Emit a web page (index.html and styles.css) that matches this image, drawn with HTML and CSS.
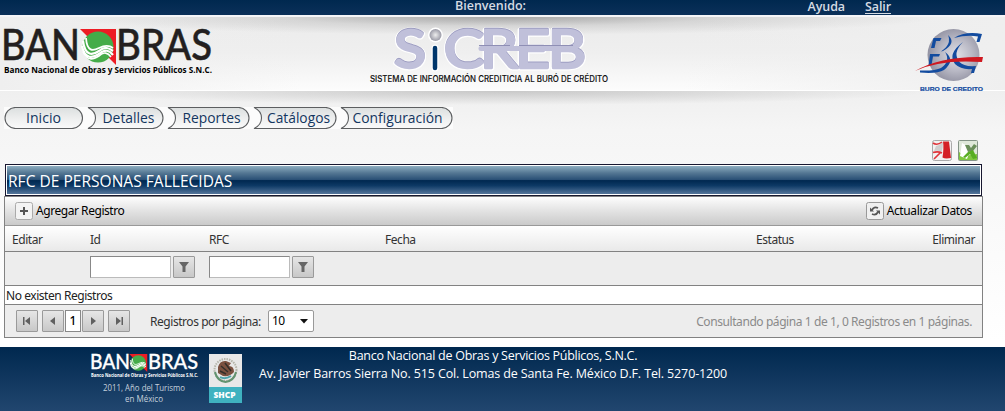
FILE: index.html
```html
<!DOCTYPE html>
<html lang="es">
<head>
<meta charset="utf-8">
<title>SICREB</title>
<link rel="stylesheet" href="styles.css">
</head>
<body>
<svg class="defs" width="0" height="0">
  <defs>
    <symbol id="emblem" viewBox="0 0 37 36">
      <path d="M0 0H36V36Z" fill="#ed1c24"/>
      <circle cx="18" cy="18" r="15.500" fill="#45ac49"/>
      <g fill="none" stroke="#fff">
        <path d="M6 9C7 23 13 22 19 19C25 16 29 16 33 19" stroke-width="1.800"/>
        <path d="M3 12C5 28 13 26 19 22C25 17 29 19 33 22" stroke-width="2.200"/>
        <path d="M2 17C5 31 13 29 19 25C25 20 29 21 33 26" stroke-width="2.200"/>
        <path d="M3 23C8 33 14 30 19 27C24 22 28 24 31 28" stroke-width="1.600"/>
      </g>
    </symbol>
    <radialGradient id="globe" cx=".55" cy=".5" r=".55"><stop stop-color="#e0e0e6"/><stop offset=".55" stop-color="#b9b9c5"/><stop offset="1" stop-color="#9292a2"/></radialGradient>
    <radialGradient id="dot"><stop stop-color="#eee"/><stop offset="1" stop-color="#9a9aa6"/></radialGradient>
    <linearGradient id="pill" x2="0" y2="1"><stop stop-color="#dcdfdf"/><stop offset=".6" stop-color="#f0f1f1"/><stop offset="1" stop-color="#fafafa"/></linearGradient>
  </defs>
</svg>

<div class="topbar">
  <span class="welcome">Bienvenido:</span>
  <span class="links"><a>Ayuda</a><a class="exit">Salir</a></span>
</div>

<header class="header">
  <svg class="logo-bank" width="214" height="50" viewBox="0 0 214 50">
    <g class="wordmark" fill="#231f20">
      <text x="-3" y="34" textLength="79" lengthAdjust="spacingAndGlyphs">BAN</text>
      <text x="112" y="34" textLength="96" lengthAdjust="spacingAndGlyphs">BRAS</text>
    </g>
    <use href="#emblem" x="76" y="3" width="37" height="36"/>
    <text class="bank-name" x="0" y="47" textLength="208" lengthAdjust="spacingAndGlyphs">Banco Nacional de Obras y Servicios Públicos S.N.C.</text>
  </svg>
  <svg class="logo-app" width="250" height="64" viewBox="365 22 250 64">
    <g class="app-halo">
      <text x="394" y="68" textLength="32" lengthAdjust="spacingAndGlyphs">S</text>
      <text x="444" y="68" textLength="40" lengthAdjust="spacingAndGlyphs">C</text>
      <text x="480" y="68" textLength="38" lengthAdjust="spacingAndGlyphs">R</text>
      <text x="515" y="68" textLength="35" lengthAdjust="spacingAndGlyphs">E</text>
      <text x="548" y="68" textLength="38" lengthAdjust="spacingAndGlyphs">B</text>
    </g>
    <g class="app-letters">
      <text x="394" y="68" textLength="32" lengthAdjust="spacingAndGlyphs">S</text>
      <text x="444" y="68" textLength="40" lengthAdjust="spacingAndGlyphs">C</text>
      <text x="480" y="68" textLength="38" lengthAdjust="spacingAndGlyphs">R</text>
      <text x="515" y="68" textLength="35" lengthAdjust="spacingAndGlyphs">E</text>
      <text x="548" y="68" textLength="38" lengthAdjust="spacingAndGlyphs">B</text>
    </g>
    <path d="M481 48.500H575" stroke="#c0c0da" stroke-width="5" stroke-linecap="round"/>
    <path d="M479 45.500H510M519 45.500H573" stroke="#8f8fb5" stroke-width="1"/>
    <circle cx="435.500" cy="35" r="7.500" fill="#fff"/>
    <circle cx="435.500" cy="35" r="6" fill="url(#dot)"/>
    <path d="M435 48V68" stroke="#fff" stroke-width="7" stroke-linecap="round"/>
    <path d="M435 48V68" stroke="#00366b" stroke-width="4.500" stroke-linecap="round"/>
    <text class="app-sub" x="370" y="81.500" textLength="238" lengthAdjust="spacingAndGlyphs">SISTEMA DE INFORMACIÓN CREDITICIA AL BURÓ DE CRÉDITO</text>
  </svg>
  <svg class="logo-buro" width="72" height="66" viewBox="914 27 72 66">
    <circle cx="953.500" cy="55" r="26" fill="url(#globe)"/>
    <g fill="#124b9f">
      <path d="M931 48L933.500 38H941.500L940 41H936L934.500 48Z"/>
      <path d="M948 35Q957 43 943 51L941 51.500Q952 44 948 35Z"/>
      <path d="M928.500 65L930 54H940L939 56.500H933L931.500 65Z"/>
      <path d="M945 52Q956 60 944 70Q937 74 920 72.500V70.500Q935 71 941 68Q951 61 945 52Z"/>
      <path d="M954 38Q965 31 982 34L979.500 42H976.500L978 36.500Q967 34.500 954 38Z"/>
      <path d="M963 42Q947 54 955 64Q961 70 972 69L971 73H974L976 66Q964 67 959.500 62Q952 53 963 42Z"/>
    </g>
    <path d="M915 71Q941 56 983 57L982 62Q940 59 915 71Z" fill="#cf1820"/>
    <text class="buro-name" x="920" y="90.800" textLength="63" lengthAdjust="spacingAndGlyphs">BURO DE CREDITO</text>
  </svg>
</header>

<nav class="nav">
  <svg width="449" height="22" viewBox="4 107 449 22">
    <rect x="4" y="107" width="449" height="22" fill="#fcfcfc"/>
    <g fill="url(#pill)" stroke="#5c5e60" stroke-width="1.100">
      <rect x="5" y="107.500" width="77.500" height="21" rx="10.500"/>
      <path d="M88 107.500H152.500a10.500 10.500 0 0 1 0 21H88Q95.500 125 95.500 118T88 107.500Z"/>
      <path d="M168 107.500H238.500a10.500 10.500 0 0 1 0 21H168Q175.500 125 175.500 118T168 107.500Z"/>
      <path d="M254 107.500H325.500a10.500 10.500 0 0 1 0 21H254Q261.500 125 261.500 118T254 107.500Z"/>
      <path d="M341 107.500H441.500a10.500 10.500 0 0 1 0 21H341Q348.500 125 348.500 118T341 107.500Z"/>
    </g>
    <g class="nav-text">
      <text x="26" y="123" textLength="35" lengthAdjust="spacingAndGlyphs">Inicio</text>
      <text x="102.500" y="123" textLength="52" lengthAdjust="spacingAndGlyphs">Detalles</text>
      <text x="182.500" y="123" textLength="58" lengthAdjust="spacingAndGlyphs">Reportes</text>
      <text x="267" y="123" textLength="63" lengthAdjust="spacingAndGlyphs">Catálogos</text>
      <text x="352.500" y="123" textLength="90" lengthAdjust="spacingAndGlyphs">Configuración</text>
    </g>
  </svg>
</nav>

<div class="exports">
  <svg width="20" height="21" viewBox="0 0 20 21">
    <rect x=".5" y=".5" width="19" height="20" rx="2" fill="#f2f2f2" stroke="#aaa"/>
    <path d="M4 6Q8 5 11 2Q11 8 9.500 12Q6 10 2 11Z" fill="#d0cece"/>
    <path d="M11 1.500H17L19 18Q13 19 10.500 17.500Q12 8 11 1.500Z" fill="#d42027"/>
    <path d="M1 3Q5 6 10 2M1 12.500Q6 11 10 13M2 19Q6 15 9 12" fill="none" stroke="#e0343a" stroke-width="1.600"/>
  </svg>
  <svg width="20" height="21" viewBox="0 0 20 21">
    <rect x=".5" y=".5" width="19" height="20" rx="1" fill="#dfe8da" stroke="#849487"/>
    <path d="M1 20V12Q7 17 19 14V20Z" fill="#7fc740"/>
    <path d="M4 3L2 16L9 19L13 8Z" fill="#fff"/>
    <path d="M7 5H11L13 8L16 4L19 6L15 11L10 12Z" fill="#6b8f5b"/>
    <path d="M10 12L15 10L19 18L15 19L12 14L7 18L5 17Z" fill="#57ad22"/>
  </svg>
</div>

<h1 class="title"><span>RFC DE PERSONAS FALLECIDAS</span></h1>

<main class="grid">
  <div class="toolbar">
    <div class="command">
      <svg width="18" height="18" viewBox="0 0 18 18"><rect x=".5" y=".5" width="17" height="17" rx="2" fill="#f3f3f3" stroke="#aaa"/><path d="M9 5V13M5 9H13" stroke="#555" stroke-width="2"/></svg>
      <span class="t-add">Agregar Registro</span>
    </div>
    <div class="command">
      <svg width="18" height="18" viewBox="0 0 18 18"><rect x=".5" y=".5" width="17" height="17" rx="2" fill="#f0f0f0" stroke="#999"/><path d="M6 8Q8 4 12 6M12 10Q10 14 6 12" stroke="#555" stroke-width="1.700" fill="none"/><path d="M4 5.500V9.500H8ZM14 12.500V8.500H10Z" fill="#555"/></svg>
      <span class="t-refresh">Actualizar Datos</span>
    </div>
  </div>
  <div class="row head">
    <span>Editar</span><span>Id</span><span>RFC</span><span>Fecha</span><span>Estatus</span><span class="end">Eliminar</span>
  </div>
  <div class="row filters">
    <span></span>
    <div class="filter"><input type="text"><button><svg width="10" height="10" viewBox="0 0 10 10"><path d="M0 0H10L6.500 4.500V10H3.500V4.500Z" fill="#666"/></svg></button></div>
    <div class="filter"><input type="text"><button><svg width="10" height="10" viewBox="0 0 10 10"><path d="M0 0H10L6.500 4.500V10H3.500V4.500Z" fill="#666"/></svg></button></div>
  </div>
  <div class="empty"><span>No existen Registros</span></div>
  <div class="pager">
    <button><svg width="10" height="8" viewBox="0 0 10 8"><path d="M1 0H2.500V8H1ZM8 0V8L3 4Z" fill="#606060"/></svg></button>
    <button class="prev"><svg width="10" height="8" viewBox="0 0 10 8"><path d="M7 0V8L2 4Z" fill="#606060"/></svg></button>
    <b class="current">1</b>
    <button class="next"><svg width="10" height="8" viewBox="0 0 10 8"><path d="M3 0V8L8 4Z" fill="#606060"/></svg></button>
    <button class="last"><svg width="10" height="8" viewBox="0 0 10 8"><path d="M2 0V8L7 4ZM7.500 0H9V8H7.500Z" fill="#606060"/></svg></button>
    <span class="size-label">Registros por página:</span>
    <div class="select"><span>10</span><svg width="8" height="5" viewBox="0 0 8 5"><path d="M0 0H8L4 4.500Z" fill="#111"/></svg></div>
    <span class="info">Consultando página 1 de 1, 0 Registros en 1 páginas.</span>
  </div>
</main>

<footer class="footer">
  <svg class="foot-bank" width="110" height="56" viewBox="90 353 110 56">
    <g class="wordmark-small" fill="#fff">
      <text x="90" y="369" textLength="40" lengthAdjust="spacingAndGlyphs">BAN</text>
      <text x="148" y="369" textLength="50" lengthAdjust="spacingAndGlyphs">BRAS</text>
    </g>
    <use href="#emblem" x="129" y="354" width="19" height="18"/>
    <text class="foot-name" x="91" y="376.500" textLength="107" lengthAdjust="spacingAndGlyphs">Banco Nacional de Obras y Servicios Públicos S.N.C.</text>
    <g class="foot-year">
      <text x="103" y="391" textLength="82" lengthAdjust="spacingAndGlyphs">2011, Año del Turismo</text>
      <text x="125" y="401.500" textLength="38" lengthAdjust="spacingAndGlyphs">en México</text>
    </g>
  </svg>
  <svg class="shcp" width="33" height="49" viewBox="0 0 33 49">
    <path fill="#e8e8e8" d="M0 0H33V33H0Z"/><path fill="#3fb2c0" d="M0 33H33V49H0Z"/>
    <circle cx="16.500" cy="16" r="11" fill="none" stroke="#b5b5aa" stroke-width="2" stroke-dasharray="1.500 1"/>
    <path d="M6 18Q8 27 16.500 28Q25 27 27 18" fill="none" stroke="#62936f" stroke-width="2"/>
    <path d="M9 13Q11 6 17 7L22 9L20 12Q25 12 25 18Q21 23 14 22L9 19Z" fill="#7b5140"/>
    <path d="M12 12L19 18M11 17L17 20M16 9L22 17" stroke="#342f2a" stroke-width="1.500"/>
    <path d="M11 23Q16 26 22 22" stroke="#50a5ac" stroke-width="2" fill="none"/>
    <text class="shcp-text" x="4.500" y="44" textLength="22" lengthAdjust="spacingAndGlyphs">SHCP</text>
  </svg>
  <div class="address">
    <div class="a1">Banco Nacional de Obras y Servicios Públicos, S.N.C.</div>
    <div class="a2">Av. Javier Barros Sierra No. 515 Col. Lomas de Santa Fe. México D.F. Tel. 5270-1200</div>
  </div>
</footer>
</body>
</html>
```
FILE: styles.css
```css
* { box-sizing: border-box; }
body {
  margin: 0;
  height: 411px;
  overflow: hidden;
  background: linear-gradient(#efefef 90px, #f5f5f5 130px, #fff 340px);
  font-family: "Noto Sans", "Open Sans", sans-serif;
  font-size: 12px;
  color: #333;
  white-space: nowrap;
}
.defs { display: block; }
.topbar {
  height: 15px;
  display: flex;
  justify-content: space-between;
  padding: 0 114px 0 455px;
  background: linear-gradient(#00284f, #0b3059);
  color: #d5dbe3;
  font-family: "Open Sans", sans-serif;
  font-weight: 600;
  font-size: 12.5px;
  line-height: 13px;
}
.welcome { line-height: 11px; }
.links { display: flex; gap: 20px; letter-spacing: -0.1px; }
.exit { border-bottom: 1px solid #d5dbe3; height: 14px; }

.header {
  height: 76px;
  display: flex;
  align-items: flex-start;
  padding-left: 4px;
  border-top: 2px solid #f5f5f8;
  border-bottom: 1px solid #fff;
  background:
    radial-gradient(ellipse 440px 18px at 500px 0, rgba(110,110,110,.55), rgba(150,150,150,.25) 50%, transparent),
    linear-gradient(90deg, #efefef, transparent 30%, transparent 68%, #efefef),
    linear-gradient(#ebebeb, #efefef 50%, #fcfcfc);
}
.logo-bank { margin-top: 9px; overflow: visible; }
.logo-app { margin: 5px 0 0 147px; overflow: visible; }
.logo-buro { margin: 10px 0 -4px 299px; flex: none; }
.wordmark { font: 500 42px Lato, sans-serif; stroke: #231f20; stroke-width: .5px; }
.bank-name { font: 700 9px "Open Sans", sans-serif; fill: #000; }
.app-halo, .app-letters { font: 400 52px Lato, sans-serif; stroke-linejoin: round; }
.app-halo { fill: #fff; stroke: #fff; stroke-width: 5px; }
.app-letters { fill: #c0c0da; stroke: #c0c0da; stroke-width: 2.6px; filter: drop-shadow(0 -.8px 0 #9c9cc0); }
.app-sub { font: 500 8.5px Inter, sans-serif; fill: #111; stroke: #111; stroke-width: .1px; }
.buro-name { font: 700 6px "Liberation Sans", sans-serif; fill: #124b9f; stroke: #124b9f; stroke-width: .2px; }

.nav {
  height: 49px;
  padding: 16px 0 0 4px;
  background: radial-gradient(ellipse 430px 14px at 500px 0, rgba(130,130,130,.36), transparent);
}
.nav svg { display: block; }
.nav-text { font: 400 14.5px "Open Sans", sans-serif; fill: #13365f; }
.exports { display: flex; justify-content: flex-end; gap: 6px; height: 24px; padding-right: 27px; }

.title {
  margin: 0 0 0 5px;
  width: 977px;
  height: 32px;
  padding: 1px;
  border: 1px solid #17172f;
  background: #fff;
  color: #fff;
  font: 400 15.5px/31px "Open Sans", sans-serif;
}
.title span {
  display: block;
  height: 28px;
  padding-left: 1px;
  letter-spacing: .03px;
  background: linear-gradient(#8eaec1 0, #547793 25%, #294f75 49%, #002850 52%, #0d3965 70%, #54759a);
}
.grid {
  margin-left: 4px;
  width: 979px;
  height: 142px;
  border: 1px solid #828282;
  background: #ededed;
}
.toolbar {
  display: flex;
  justify-content: space-between;
  height: 29px;
  padding: 5px 10px 0;
  border-bottom: 1px solid #999;
  background: linear-gradient(#fdfdfd, #e5e5e5 45%, #cacaca);
  color: #000;
}
.command { display: flex; gap: 3px; line-height: 17px; }
.row { display: grid; grid-template-columns: 78px 119px 176px 371px 120px 1fr; padding: 0 7px; }
.head { height: 26px; line-height: 27px; border-bottom: 1px solid #828282; background: linear-gradient(#fff, #e9e9e9); }
.end { text-align: right; }
.filters { height: 34px; padding-top: 4px; border-bottom: 1px solid #828282; }
.filter { display: flex; gap: 2px; }
.filter input { width: 81px; height: 22px; border: 1px solid #888; border-right-color: #bbb; border-bottom-color: #bbb; background: #fff; padding: 0; }
button { display: flex; align-items: center; justify-content: center; width: 22px; height: 22px; padding: 0; border: 1px solid #9a9a9a; border-radius: 1px; background: linear-gradient(#e6e6e6, #c8c8c8); }
.empty { height: 19px; line-height: 20px; padding-left: 1px; border-bottom: 1px solid #828282; background: #fff; color: #222; }
.pager { display: flex; height: 32px; padding: 5px 10px 0 11px; line-height: 24px; }
.prev { margin-left: 4px; }
.next { margin-left: 1px; }
.last { margin-left: 4px; }
.current { width: 16px; height: 22px; margin-left: 1px; border: 1px solid #888; background: #fff; text-align: center; line-height: 20px; font-weight: 500; color: #000; }
.size-label { margin-left: 20px; width: 112px; }
.select { display: flex; align-items: center; justify-content: space-between; width: 46px; height: 22px; margin-left: 6px; padding: 0 5px 0 3px; border: 1px solid #999; border-radius: 2px; background: #fff; color: #000; letter-spacing: -.5px; }
.info { margin-left: auto; color: #8a8a8a; letter-spacing: -.42px; }
.t-add, .t-refresh, .head, .empty, .size-label { letter-spacing: -.45px; }
.t-refresh { letter-spacing: -.38px; }

.footer {
  display: flex;
  height: 64px;
  margin-top: 9px;
  padding-left: 90px;
  background: linear-gradient(#00284f, #21466f);
  color: #fff;
}
.foot-bank { margin-top: 6px; overflow: visible; }
.wordmark-small { font: 500 21px Lato, sans-serif; stroke: #fff; stroke-width: .3px; }
.foot-name { font: 700 4.5px "Open Sans", sans-serif; fill: #fff; }
.foot-year { font: 400 8.5px "Open Sans", sans-serif; fill: #c5d0dc; }
.shcp { margin: 7px 0 0 9px; }
.shcp-text { font: 800 9px "Open Sans", sans-serif; fill: #fff; }
.address { width: 502px; text-align: center; font: 400 12.5px/18px "Open Sans", sans-serif; }
.a1 { letter-spacing: -.28px; }
.a2 { letter-spacing: -.13px; }
```
